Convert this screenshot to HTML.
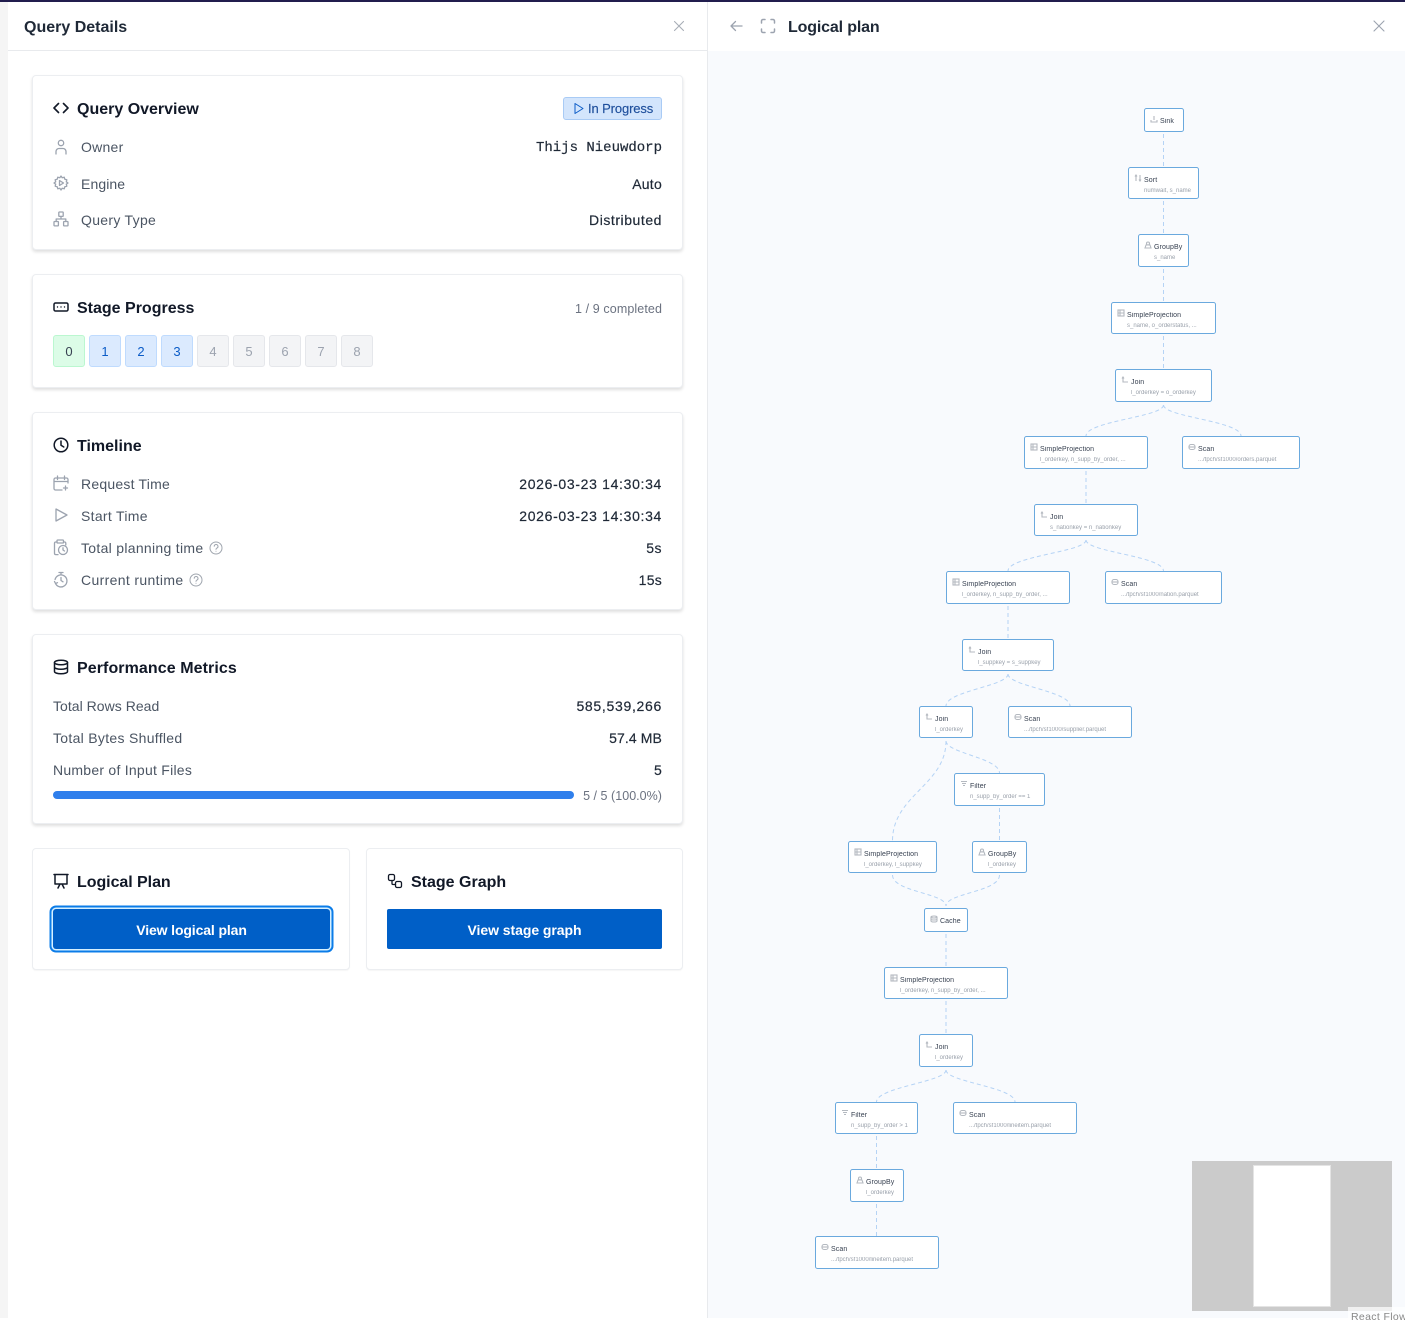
<!DOCTYPE html>
<html><head><meta charset="utf-8"><title>Query Details</title>
<style>
*{box-sizing:border-box}
html,body{margin:0;padding:0;width:1405px;height:1318px;overflow:hidden;background:#fff;font-family:"Liberation Sans",sans-serif;color:#1f2937}
.a{position:absolute;white-space:nowrap}
.card{position:absolute;left:32px;width:651px;background:#fff;border:1px solid #eceef1;border-radius:4px;box-shadow:0 2px 3px rgba(0,0,0,.13)}
.h{position:absolute;white-space:nowrap;font-size:16px;font-weight:700;color:#111827;line-height:20px;letter-spacing:0}
.l{position:absolute;white-space:nowrap;font-size:14px;line-height:18px;color:#4b5563;letter-spacing:.25px}
.v{position:absolute;white-space:nowrap;font-size:14px;line-height:18px;color:#1f2937;right:743px;letter-spacing:.25px;-webkit-text-stroke:.2px #1f2937}
svg.i{position:absolute;fill:none;stroke:currentColor;stroke-width:1.3;stroke-linecap:round;stroke-linejoin:round}
.g{color:#9ca3af}.k{color:#111827}
.st{position:absolute;top:335px;width:32px;height:32px;border-radius:3px;font-size:13px;line-height:31px;text-align:center;border:1px solid}
.st.d{background:#dcfce7;border-color:#bbf7d0;color:#374151}
.st.b{background:#dbeafe;border-color:#bfdbfe;color:#0b5cc7}
.st.n{background:#f3f4f6;border-color:#e5e7eb;color:#9ca3af}
.btn{position:absolute;top:909px;height:40px;background:#005fc7;color:#fff;font-size:14px;font-weight:700;line-height:43px;text-align:center;border-radius:2px;letter-spacing:-.12px}
.n1{position:absolute;background:#fff;border:1px solid #6aa9de;border-radius:2.5px}
.n1 b{position:absolute;font-weight:400;font-size:7px;line-height:9px;color:#374151;white-space:nowrap;letter-spacing:.1px;left:15px;top:8px;filter:blur(.2px)}
.n1 i{position:absolute;font-style:normal;font-size:6px;line-height:7px;color:#9aa1ab;white-space:nowrap;left:15px;top:20px;filter:blur(.25px)}
.n1 svg{position:absolute;left:5px;top:6px;width:8px;height:8px;fill:none;stroke:#b4b9c0;stroke-width:1.1}
</style></head><body>
<div class="a" style="left:0;top:0;width:1405px;height:2px;background:#211d4e;z-index:5"></div>
<div class="a" style="left:0;top:0;width:8px;height:1318px;background:#f5f5f5"></div>
<div class="a" style="left:707px;top:0;width:1px;height:1318px;background:#e8eaed"></div>
<div class="a" style="left:8px;top:50px;width:699px;height:1px;background:#e8eaed"></div>

<!-- Left header -->
<div class="a" style="left:24px;top:18px;font-size:16px;font-weight:700;line-height:20px;color:#1f2937">Query Details</div>
<svg class="i" style="left:672px;top:19px;color:#a8aeb7;stroke-width:1.1" width="14" height="14" viewBox="0 0 14 14"><path d="M2.500 2.500l9 9M11.500 2.500l-9 9"/></svg>

<!-- Overview -->
<div class="card" style="top:75px;height:175px"></div>
<svg class="i k" style="left:53px;top:100px;stroke-width:1.600" width="16" height="16" viewBox="0 0 16 16"><path d="M5.500 3.500L1 8l4.500 4.500M10.500 3.500L15 8l-4.500 4.500"/></svg>
<div class="h" style="left:77px;top:100px">Query Overview</div>
<div class="a" style="left:563px;top:97px;width:99px;height:23px;background:#d3e5fc;border:1px solid #a9cbf5;border-radius:3px"></div>
<svg class="i" style="left:573px;top:102px;color:#0b5cc7;stroke-width:1" width="12" height="13" viewBox="0 0 12 13"><path d="M2 1.500v10l8-5z"/></svg>
<div class="a" style="left:588px;top:100px;font-size:13px;line-height:17px;color:#1e4f9c;letter-spacing:-.12px;-webkit-text-stroke:.15px #1e4f9c">In Progress</div>

<svg class="i g" style="left:53px;top:139px" width="16" height="16" viewBox="0 0 16 16"><circle cx="8" cy="4" r="2.700"/><path d="M3 15v-2.500a3 3 0 0 1 3-3h4a3 3 0 0 1 3 3V15"/></svg>
<div class="l" style="left:81px;top:138px">Owner</div>
<div class="a" style="right:743px;top:139px;font-family:'Liberation Mono',monospace;font-size:14px;line-height:18px;color:#1f2937;-webkit-text-stroke:.2px #1f2937">Thijs Nieuwdorp</div>

<svg class="i g" style="left:53px;top:175px" width="16" height="16" viewBox="0 0 16 16"><path d="M8 1l1.200 1.700 2-.5.600 2 2 .6-.5 2L15 8l-1.700 1.200.5 2-2 .6-.6 2-2-.5L8 15l-1.200-1.700-2 .5-.6-2-2-.6.5-2L1 8l1.700-1.200-.5-2 2-.6.6-2 2 .5z"/><path d="M6.500 5.500v5l4-2.500z"/></svg>
<div class="l" style="left:81px;top:175px;letter-spacing:.1px">Engine</div>
<div class="v" style="top:175px">Auto</div>

<svg class="i g" style="left:53px;top:211px" width="16" height="16" viewBox="0 0 16 16"><rect x="5.800" y="1" width="4.400" height="4.400" rx=".6"/><rect x="1" y="10.500" width="4.400" height="4.400" rx=".6"/><rect x="10.600" y="10.500" width="4.400" height="4.400" rx=".6"/><path d="M8 5.500V8M3.200 10.500V8h9.600v2.500"/></svg>
<div class="l" style="left:81px;top:211px;letter-spacing:.3px">Query Type</div>
<div class="v" style="top:211px;letter-spacing:.55px">Distributed</div>

<!-- Stage progress -->
<div class="card" style="top:274px;height:114px"></div>
<svg class="i k" style="left:53px;top:299px;stroke-width:1.500" width="16" height="16" viewBox="0 0 16 16"><rect x="1" y="4" width="14" height="8" rx="1.500"/><path d="M4.500 8h.01M8 8h.01M11.500 8h.01" stroke-width="1.400"/></svg>
<div class="h" style="left:77px;top:299px">Stage Progress</div>
<div class="a" style="right:743px;top:301px;font-size:12.500px;line-height:17px;color:#6b7280;letter-spacing:.1px">1 / 9 completed</div>
<div class="st d" style="left:53px">0</div>
<div class="st b" style="left:89px">1</div>
<div class="st b" style="left:125px">2</div>
<div class="st b" style="left:161px">3</div>
<div class="st n" style="left:197px">4</div>
<div class="st n" style="left:233px">5</div>
<div class="st n" style="left:269px">6</div>
<div class="st n" style="left:305px">7</div>
<div class="st n" style="left:341px">8</div>

<!-- Timeline -->
<div class="card" style="top:412px;height:198px"></div>
<svg class="i k" style="left:53px;top:437px;stroke-width:1.500" width="16" height="16" viewBox="0 0 16 16"><circle cx="8" cy="8" r="6.800"/><path d="M8 4v4.200l2.800 1.800"/></svg>
<div class="h" style="left:77px;top:437px">Timeline</div>

<svg class="i g" style="left:53px;top:475px" width="16" height="16" viewBox="0 0 16 16"><path d="M15 8V4.500a1.500 1.500 0 0 0-1.500-1.500h-11A1.500 1.500 0 0 0 1 4.500v9A1.500 1.500 0 0 0 2.500 15H9M1 6.500h14M4.500 1v3.500M11.500 1v3.500M12.500 11v4M10.500 13h4"/></svg>
<div class="l" style="left:81px;top:475px;letter-spacing:.22px">Request Time</div>
<div class="v" style="top:475px;letter-spacing:.67px">2026-03-23 14:30:34</div>

<svg class="i g" style="left:53px;top:507px" width="16" height="16" viewBox="0 0 16 16"><path d="M3 2v12l11-6z"/></svg>
<div class="l" style="left:81px;top:507px;letter-spacing:.3px">Start Time</div>
<div class="v" style="top:507px;letter-spacing:.67px">2026-03-23 14:30:34</div>

<svg class="i g" style="left:53px;top:539px" width="16" height="17" viewBox="0 0 16 17"><path d="M4 3H2.800A1.300 1.300 0 0 0 1.500 4.300v10A1.300 1.300 0 0 0 2.800 15.600H5M10.500 3h1a1.300 1.300 0 0 1 1.300 1.300V6"/><rect x="4" y="1" width="6.500" height="3" rx=".8"/><circle cx="10" cy="11" r="4.500"/><path d="M10 8.800V11l1.500 1"/></svg>
<div class="l" style="left:81px;top:539px;letter-spacing:.3px">Total planning time</div>
<svg class="i" style="left:209px;top:541px;color:#a0a6af;stroke-width:1" width="14" height="14" viewBox="0 0 14 14"><circle cx="7" cy="7" r="6"/><path d="M5.200 5.300a1.900 1.900 0 1 1 2.700 1.800c-.6.300-.9.700-.9 1.300M7 10.300h.01"/></svg>

<div class="v" style="top:539px;letter-spacing:.5px">5s</div>

<svg class="i g" style="left:53px;top:571px" width="16" height="17" viewBox="0 0 16 17"><path d="M6 1.500h4M8 1.500v2M2.300 12a6 6 0 1 0-.2-3.500M8 6.500v3l2 1.300M1.500 10.500l1 2 2-.8"/></svg>
<div class="l" style="left:81px;top:571px;letter-spacing:.35px">Current runtime</div>
<svg class="i" style="left:189px;top:573px;color:#a0a6af;stroke-width:1" width="14" height="14" viewBox="0 0 14 14"><circle cx="7" cy="7" r="6"/><path d="M5.200 5.300a1.900 1.900 0 1 1 2.700 1.800c-.6.300-.9.700-.9 1.300M7 10.300h.01"/></svg>
<div class="v" style="top:571px">15s</div>

<!-- Performance -->
<div class="card" style="top:634px;height:190px"></div>
<svg class="i k" style="left:53px;top:659px;stroke-width:1.500" width="16" height="16" viewBox="0 0 16 16"><ellipse cx="8" cy="3.500" rx="6.500" ry="2.300"/><path d="M1.500 3.500v9c0 1.300 2.900 2.300 6.500 2.300s6.500-1 6.500-2.300v-9M1.500 8c0 1.300 2.900 2.300 6.500 2.300s6.500-1 6.500-2.300"/></svg>
<div class="h" style="left:77px;top:659px;letter-spacing:.08px">Performance Metrics</div>
<div class="l" style="left:53px;top:697px;letter-spacing:.03px">Total Rows Read</div>
<div class="v" style="top:697px;letter-spacing:.7px">585,539,266</div>
<div class="l" style="left:53px;top:729px;letter-spacing:.3px">Total Bytes Shuffled</div>
<div class="v" style="top:729px;letter-spacing:.1px">57.4 MB</div>
<div class="l" style="left:53px;top:761px;letter-spacing:.25px">Number of Input Files</div>
<div class="v" style="top:761px">5</div>
<div class="a" style="left:53px;top:791px;width:521px;height:8px;border-radius:4px;background:#2f7fec"></div>
<div class="a" style="right:743px;top:788px;font-size:12.500px;line-height:17px;color:#6b7280;letter-spacing:.03px">5 / 5 (100.0%)</div>

<!-- Bottom cards -->
<div class="a" style="left:32px;top:848px;width:318px;height:122px;border:1px solid #eceef1;border-radius:4px;background:#fff;box-shadow:0 1px 1px rgba(0,0,0,.04)"></div>
<div class="a" style="left:366px;top:848px;width:317px;height:122px;border:1px solid #eceef1;border-radius:4px;background:#fff;box-shadow:0 1px 1px rgba(0,0,0,.04)"></div>
<svg class="i k" style="left:53px;top:873px;stroke-width:1.500" width="16" height="16" viewBox="0 0 16 16"><path d="M1 1.500h14M2 1.500v9.500h12V1.500M5 15l2-4M11 15l-2-4"/></svg>
<div class="h" style="left:77px;top:873px;letter-spacing:-.05px">Logical Plan</div>
<svg class="i k" style="left:387px;top:873px;stroke-width:1.300" width="16" height="16" viewBox="0 0 16 16"><rect x="1.500" y="1.500" width="6" height="6" rx="1.500"/><rect x="8.500" y="8.500" width="6" height="6" rx="1.500"/><path d="M5 7.500v3a1 1 0 0 0 1 1h2.500"/></svg>
<div class="h" style="left:411px;top:873px">Stage Graph</div>
<div class="btn" style="left:53px;width:277px;box-shadow:0 0 0 1.500px #d6f0ff,0 0 0 3.500px #0b7ce8;border-radius:3px">View logical plan</div>
<div class="btn" style="left:387px;width:275px;letter-spacing:-.05px">View stage graph</div>

<!-- Right panel -->
<svg class="i g" style="left:729px;top:19px" width="14" height="14" viewBox="0 0 14 14"><path d="M13 7H2M6.500 2.500L2 7l4.500 4.500"/></svg>
<svg class="i" style="left:760px;top:18px;color:#9ca3af;stroke-width:1.500" width="16" height="16" viewBox="0 0 16 16"><path d="M1.500 5V3a1.500 1.500 0 0 1 1.500-1.500h2M11 1.500h2A1.500 1.500 0 0 1 14.500 3v2M14.500 11v2a1.500 1.500 0 0 1-1.500 1.500h-2M5 14.500H3A1.500 1.500 0 0 1 1.500 13v-2"/></svg>
<div class="a" style="left:788px;top:18px;font-size:16px;font-weight:700;line-height:20px;color:#1f2937;letter-spacing:-.15px">Logical plan</div>
<svg class="i g" style="left:1372px;top:19px;stroke-width:1.100" width="14" height="14" viewBox="0 0 14 14"><path d="M2 2l10 10M12 2L2 12"/></svg>

<div class="a" style="left:708px;top:51px;width:697px;height:1267px;background:#f8fafd"></div>

<svg class="a" style="left:0;top:0;overflow:visible" width="1405" height="1318" fill="none" stroke="#b5d3f5" stroke-width="1" stroke-dasharray="4 3">
<path d="M1163.500 134V167M1163.500 201V234M1163.500 269V302M1163.500 336V369"/>
<path d="M1163.500 405C1163.500 417 1086 421 1086 436M1163.500 405C1163.500 417 1241 421 1241 436"/>
<path d="M1086 471V504"/>
<path d="M1086 540C1086 552 1008 556 1008 571M1086 540C1086 552 1163.500 556 1163.500 571"/>
<path d="M1008 606V639"/>
<path d="M1008 674C1008 686 946 691 946 706M1008 674C1008 686 1070 691 1070 706"/>
<path d="M946 741C946 753 999.500 758 999.500 773M946 741C946 785 892.500 795 892.500 841"/>
<path d="M999.500 808V841"/>
<path d="M892.500 875C892.500 892 946 893 946 906M999.500 875C999.500 892 946 893 946 906"/>
<path d="M946 934V967M946 1001V1034"/>
<path d="M946 1070C946 1082 876.500 1087 876.500 1102M946 1070C946 1082 1015 1087 1015 1102"/>
<path d="M876.500 1136V1169M876.500 1204V1236"/>
</svg>

<div class="n1" style="left:1144px;top:108px;width:40px;height:24px"><svg viewBox="0 0 8 8"><path d="M1 5v2h6V5M4 1v4"/></svg><b>Sink</b></div>
<div class="n1" style="left:1128px;top:167px;width:71px;height:32px"><svg viewBox="0 0 8 8"><path d="M2 1v6M6 1v6M1 2.500L2 1l1 1.500M5 5.500L6 7l1-1.500"/></svg><b>Sort</b><i>numwait, s_name</i></div>
<div class="n1" style="left:1138px;top:234px;width:51px;height:33px"><svg viewBox="0 0 8 8"><circle cx="4" cy="2.500" r="1.500"/><path d="M1 7l1-3h4l1 3z"/></svg><b>GroupBy</b><i>s_name</i></div>
<div class="n1" style="left:1111px;top:302px;width:105px;height:32px"><svg viewBox="0 0 8 8"><rect x="1" y="1" width="6" height="6"/><path d="M1 4h6M3 1v6"/></svg><b>SimpleProjection</b><i>s_name, o_orderstatus, ...</i></div>
<div class="n1" style="left:1115px;top:369px;width:97px;height:33px"><svg viewBox="0 0 8 8"><path d="M2 1v5h5M1 2.500L2 1l1 1.500"/></svg><b>Join</b><i>l_orderkey = o_orderkey</i></div>
<div class="n1" style="left:1024px;top:436px;width:124px;height:33px"><svg viewBox="0 0 8 8"><rect x="1" y="1" width="6" height="6"/><path d="M1 4h6M3 1v6"/></svg><b>SimpleProjection</b><i>l_orderkey, n_supp_by_order, ...</i></div>
<div class="n1" style="left:1182px;top:436px;width:118px;height:33px"><svg viewBox="0 0 8 8"><rect x="1" y="1.500" width="6" height="5" rx="2"/><path d="M1 4h6"/></svg><b>Scan</b><i>.../tpch/sf1000/orders.parquet</i></div>
<div class="n1" style="left:1034px;top:504px;width:104px;height:32px"><svg viewBox="0 0 8 8"><path d="M2 1v5h5M1 2.500L2 1l1 1.500"/></svg><b>Join</b><i>s_nationkey = n_nationkey</i></div>
<div class="n1" style="left:946px;top:571px;width:124px;height:33px"><svg viewBox="0 0 8 8"><rect x="1" y="1" width="6" height="6"/><path d="M1 4h6M3 1v6"/></svg><b>SimpleProjection</b><i>l_orderkey, n_supp_by_order, ...</i></div>
<div class="n1" style="left:1105px;top:571px;width:117px;height:33px"><svg viewBox="0 0 8 8"><rect x="1" y="1.500" width="6" height="5" rx="2"/><path d="M1 4h6"/></svg><b>Scan</b><i>.../tpch/sf1000/nation.parquet</i></div>
<div class="n1" style="left:962px;top:639px;width:92px;height:32px"><svg viewBox="0 0 8 8"><path d="M2 1v5h5M1 2.500L2 1l1 1.500"/></svg><b>Join</b><i>l_suppkey = s_suppkey</i></div>
<div class="n1" style="left:919px;top:706px;width:54px;height:32px"><svg viewBox="0 0 8 8"><path d="M2 1v5h5M1 2.500L2 1l1 1.500"/></svg><b>Join</b><i>l_orderkey</i></div>
<div class="n1" style="left:1008px;top:706px;width:124px;height:32px"><svg viewBox="0 0 8 8"><rect x="1" y="1.500" width="6" height="5" rx="2"/><path d="M1 4h6"/></svg><b>Scan</b><i>.../tpch/sf1000/supplier.parquet</i></div>
<div class="n1" style="left:954px;top:773px;width:91px;height:33px"><svg viewBox="0 0 8 8"><path d="M1 1.500h6M2 3.500h4M3 5.500h2"/></svg><b>Filter</b><i>n_supp_by_order == 1</i></div>
<div class="n1" style="left:848px;top:841px;width:89px;height:32px"><svg viewBox="0 0 8 8"><rect x="1" y="1" width="6" height="6"/><path d="M1 4h6M3 1v6"/></svg><b>SimpleProjection</b><i>l_orderkey, l_suppkey</i></div>
<div class="n1" style="left:972px;top:841px;width:55px;height:32px"><svg viewBox="0 0 8 8"><circle cx="4" cy="2.500" r="1.500"/><path d="M1 7l1-3h4l1 3z"/></svg><b>GroupBy</b><i>l_orderkey</i></div>
<div class="n1" style="left:924px;top:908px;width:44px;height:24px"><svg viewBox="0 0 8 8"><ellipse cx="4" cy="2" rx="3" ry="1"/><path d="M1 2v4c0 .6 1.300 1 3 1s3-.4 3-1V2M1 4c0 .6 1.300 1 3 1s3-.4 3-1"/></svg><b>Cache</b></div>
<div class="n1" style="left:884px;top:967px;width:124px;height:32px"><svg viewBox="0 0 8 8"><rect x="1" y="1" width="6" height="6"/><path d="M1 4h6M3 1v6"/></svg><b>SimpleProjection</b><i>l_orderkey, n_supp_by_order, ...</i></div>
<div class="n1" style="left:919px;top:1034px;width:54px;height:33px"><svg viewBox="0 0 8 8"><path d="M2 1v5h5M1 2.500L2 1l1 1.500"/></svg><b>Join</b><i>l_orderkey</i></div>
<div class="n1" style="left:835px;top:1102px;width:83px;height:32px"><svg viewBox="0 0 8 8"><path d="M1 1.500h6M2 3.500h4M3 5.500h2"/></svg><b>Filter</b><i>n_supp_by_order &gt; 1</i></div>
<div class="n1" style="left:953px;top:1102px;width:124px;height:32px"><svg viewBox="0 0 8 8"><rect x="1" y="1.500" width="6" height="5" rx="2"/><path d="M1 4h6"/></svg><b>Scan</b><i>.../tpch/sf1000/lineitem.parquet</i></div>
<div class="n1" style="left:850px;top:1169px;width:54px;height:33px"><svg viewBox="0 0 8 8"><circle cx="4" cy="2.500" r="1.500"/><path d="M1 7l1-3h4l1 3z"/></svg><b>GroupBy</b><i>l_orderkey</i></div>
<div class="n1" style="left:815px;top:1236px;width:124px;height:33px"><svg viewBox="0 0 8 8"><rect x="1" y="1.500" width="6" height="5" rx="2"/><path d="M1 4h6"/></svg><b>Scan</b><i>.../tpch/sf1000/lineitem.parquet</i></div>

<!-- Minimap -->
<div class="a" style="left:1192px;top:1161px;width:200px;height:150px;background:#cbcbcb"></div>
<div class="a" style="left:1253px;top:1165px;width:78px;height:142px;background:#fff;border:1px solid #e4e4e4"></div>
<div class="a" style="left:1348px;top:1307px;width:57px;height:11px;background:rgba(255,255,255,.7)"></div>
<div class="a" style="left:1351px;top:1311px;font-size:10.500px;line-height:12px;color:#888;letter-spacing:.35px">React Flow</div>
</body></html>
